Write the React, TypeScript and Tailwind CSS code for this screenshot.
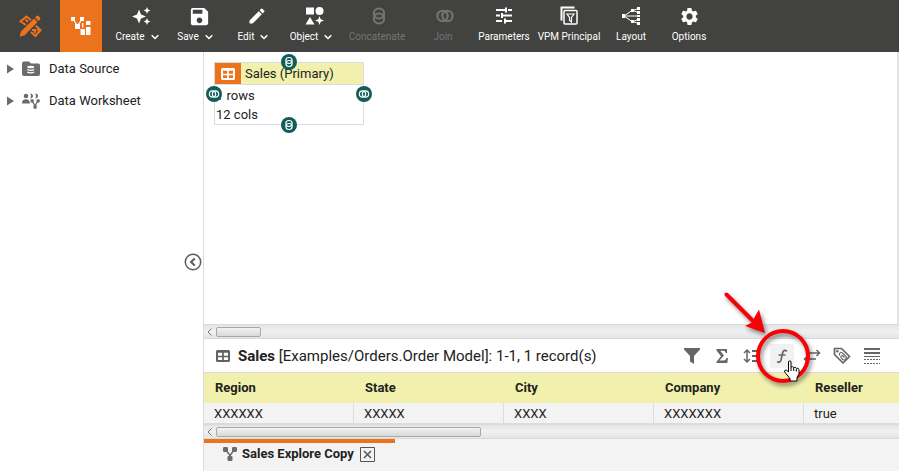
import React from "react";
import { MdSave, MdEdit, MdSettings } from "react-icons/md";

type IconProps = { className?: string };

function LogoIcon() {
  return (
    <svg width="24" height="24" viewBox="0 0 24 24" fill="none" stroke="#ec731c">
      <path d="M8 11 2.5 7.5 8.5 2.5l5 4M7.5 5.5 10 8M13 18l4.500 4 5-6-5-4.500M14 16h3v3M19 15l1.500 1.500" strokeWidth="2" />
      <path d="M3 21 18 6" stroke="#424240" strokeWidth="7" />
      <path d="M1.500 22.500 3 17.500 16 4.500 19.500 8 6.500 21.500Z" fill="#ec731c" stroke="none" />
      <path d="m17 3.500 1.500-1.500a1.500 1.500 0 0 1 2 0l1.500 1.500a1.500 1.500 0 0 1 0 2L20.500 7Z" fill="#ec731c" stroke="none" />
    </svg>
  );
}

function WorksheetAppIcon() {
  return (
    <svg width="20" height="20" viewBox="0 0 20 20" fill="#fff">
      <path d="M0 1h4v4H0zM9 1h4v4H9zM4 8h5v5H4zM9.500 13H14v6H9.500zM15 5h4.500v4H15zM15 11h4.500v8H15z" />
      <path d="M2.500 4 6 9M10.500 4 7 9M11.700 7v4.500" stroke="#fff" strokeWidth="1.300" fill="none" />
    </svg>
  );
}

function SparkleIcon() {
  return (
    <svg width="20" height="20" viewBox="0 0 20 20" fill="currentColor">
      <path d="M8 3.500 10 8.500 15 10.500 10 12.500 8 17.500 6 12.500 1 10.500 6 8.500Z" />
      <path d="m16 1 1 2.500 2.500 1-2.500 1L16 8l-1-2.500-2.500-1 2.500-1ZM16 12l1 2.500 2.500 1-2.500 1-1 2.500-1-2.500-2.500-1 2.500-1Z" />
    </svg>
  );
}

function ShapesIcon() {
  return (
    <svg width="20" height="20" viewBox="0 0 20 20" fill="currentColor">
      <path d="M1 1.500h8v7H1zM5 11l4.500 7.500H.5ZM14.500 10l1.200 3.300 3.300 1.200-3.300 1.200-1.200 3.300-1.200-3.300-3.300-1.200 3.300-1.200Z" />
      <circle cx="14.500" cy="5" r="4" />
    </svg>
  );
}

function RingsIcon({ className }: IconProps) {
  return (
    <svg className={className} viewBox="0 0 20 20" fill="none" stroke="currentColor" strokeWidth="2">
      <circle cx="7.500" cy="10" r="5.200" />
      <circle cx="12.500" cy="10" r="5.200" />
    </svg>
  );
}

function StackedRingsIcon({ className }: IconProps) {
  return (
    <svg className={className} viewBox="0 0 20 20" fill="none" stroke="currentColor" strokeWidth="2">
      <rect x="4.800" y="2.500" width="10.400" height="10" rx="5" />
      <rect x="4.800" y="7.500" width="10.400" height="10" rx="5" />
    </svg>
  );
}

function SlidersIcon() {
  return (
    <svg width="20" height="20" viewBox="0 0 20 20" stroke="currentColor" strokeWidth="2" fill="none">
      <path d="M2 4h9M14 4h4M12 1.500v5M2 9.500h4M9 9.500h9M8 7v5M2 15h6M12 15h6M11 12.500v5" />
    </svg>
  );
}

function VpmIcon() {
  return (
    <svg width="20" height="20" viewBox="0 0 20 20" stroke="currentColor" fill="none">
      <path d="M2.500 14.500v-13h13" strokeWidth="2" />
      <rect x="5" y="4.500" width="13" height="13.500" rx="1" strokeWidth="1.500" />
      <path d="M8 8h7l-2.500 3.500V16l-2-1.500v-3Z" strokeWidth="1.200" />
    </svg>
  );
}

function TreeLayoutIcon() {
  return (
    <svg width="20" height="20" viewBox="0 0 20 20" stroke="currentColor" fill="currentColor">
      <path d="m3 10 8-5.500M3 10h14M3 10l8 5.500M12 4.500l5-2M12 4.500l5 2M12 15.500l5-2M12 15.500l5 2" fill="none" strokeWidth="1" />
      <path d="M1 8h3v4H1zM10 3h3v3h-3zM10 14h3v3h-3zM16 1h3v3h-3zM16 5h3v3h-3zM16 9h3v2h-3zM16 12h3v3h-3zM16 16h3v3h-3z" stroke="none" />
    </svg>
  );
}

function CaretDown() {
  return (
    <svg width="8" height="6" viewBox="0 0 8 6" fill="none" stroke="currentColor" strokeWidth="1.500">
      <path d="m.7 1.200 3.300 3.300 3.300-3.300" />
    </svg>
  );
}

function ExpandIcon() {
  return (
    <svg width="7" height="10" viewBox="0 0 7 10" fill="#6b6b6b">
      <path d="M0 .5 7 5 0 9.500Z" />
    </svg>
  );
}

function DataFolderIcon() {
  return (
    <svg width="18" height="16" viewBox="0 0 18 16">
      <path d="M0 2.500A2 2 0 0 1 2 .5h5l2 2h7a2 2 0 0 1 2 2V13a2 2 0 0 1-2 2H2a2 2 0 0 1-2-2Z" fill="#6b6b6b" />
      <ellipse cx="8.700" cy="6" rx="3.500" ry="1.300" fill="#fff" />
      <path d="M5.200 8q3.500 1.600 7 0v1.300q-3.500 1.600-7 0ZM5.200 10.500q3.500 1.600 7 0v1.300q-3.500 1.600-7 0Z" fill="#fff" />
    </svg>
  );
}

function TreeNodes({ className }: IconProps) {
  return (
    <svg className={className} viewBox="0 0 14 14" fill="#6b6b6b">
      <path d="M2.500 2.500 7 8.500l4.500-6" fill="none" stroke="#6b6b6b" strokeWidth="1.500" />
      <rect x="0" y="0" width="5" height="5" rx="1.300" />
      <rect x="9" y="0" width="5" height="5" rx="1.300" />
      <path d="M6.200 7h1.600v3H6.200z" />
      <rect x="4.500" y="9" width="5" height="5" rx="1.300" />
    </svg>
  );
}

function WorksheetUsersIcon() {
  return (
    <svg width="18" height="16" viewBox="0 0 18 16" fill="#6b6b6b">
      <circle cx="4" cy="3" r="2.300" />
      <path d="M0 10.500Q0 6.300 4 6.300q3.500 0 4 4.200Z" />
      <path d="M8 .5q3 .2 3 2.500T8 5.500q2-2.500 0-5ZM13 .5q3 .2 3 2.500t-3 2.500q2-2.500 0-5Z" />
      <path d="m10 8 3 4.500L16 8" fill="none" stroke="#6b6b6b" strokeWidth="1.300" />
      <rect x="8.500" y="6.300" width="3.200" height="3.200" rx=".8" />
      <rect x="14.500" y="6.300" width="3.200" height="3.200" rx=".8" />
      <rect x="11.500" y="12" width="3.200" height="3.700" rx=".8" />
    </svg>
  );
}

function TableIcon({ className }: IconProps) {
  return (
    <svg className={className} viewBox="0 0 14 12" fill="none" stroke="currentColor">
      <rect x="1" y="1" width="12" height="10" rx=".5" strokeWidth="2" />
      <path d="M1 2h12M7 2v9M1 6.500h12" strokeWidth="1.700" />
    </svg>
  );
}

function FilterIcon() {
  return (
    <svg width="18" height="18" viewBox="0 0 18 18" fill="currentColor">
      <path d="M1 1h16v1.500L11 9v8l-4-2.500V9L1 2.500Z" />
    </svg>
  );
}

function SigmaIcon() {
  return (
    <svg width="18" height="18" viewBox="0 0 18 18" fill="currentColor">
      <path d="M3.500 2h10.500v4h-1.300q-.2-2.200-2.500-2.200H7.200L11 8.500 6.500 13.500h4.300q2 0 2.700-2.500H15l-.7 5H3.500v-1.300L8 9.200 3.500 3.500Z" />
    </svg>
  );
}

function SortIcon() {
  return (
    <svg width="18" height="18" viewBox="0 0 18 18" fill="none" stroke="currentColor">
      <path d="M4 3v12M1 6l3-3 3 3M1 12l3 3 3-3" strokeWidth="1.500" />
      <path d="M9 4h7M9 9h7M9 14h7" strokeWidth="2" />
    </svg>
  );
}

function FunctionIcon() {
  return (
    <svg width="18" height="18" viewBox="0 0 18 18" fill="none" stroke="currentColor" strokeWidth="1.700">
      <path d="M14 4.300Q11 2 9.800 5.200L8 13q-.8 3-4 1.800M5.500 8h7" />
    </svg>
  );
}

function SwapIcon() {
  return (
    <svg width="18" height="18" viewBox="0 0 18 18" fill="none" stroke="currentColor" strokeWidth="1.500">
      <path d="M5 6h11M13.500 3l3 3-3 3M13 12H2M4.500 9l-3 3 3 3" />
    </svg>
  );
}

function TagIcon() {
  return (
    <svg width="18" height="18" viewBox="0 0 18 18" fill="none" stroke="currentColor">
      <path d="M1.500 1.500v6L10 16l6.500-6.500L8.500 1.500Z" strokeWidth="1.700" strokeLinejoin="round" />
      <circle cx="4.300" cy="4.300" r="1.200" fill="currentColor" stroke="none" />
      <path d="M6.500 8.500v-2q1.500-2 3.500 0l3 3q1 2-.5 3t-3 0L8 10.500q-.5-2 1.500-2l2 2" strokeWidth="1.200" />
    </svg>
  );
}

function LinesIcon() {
  return (
    <svg width="18" height="18" viewBox="0 0 18 18" fill="none" stroke="currentColor">
      <path d="M1 2h16M1 6h16" strokeWidth="2" />
      <path d="M1 9.500h16" />
      <path d="M1 12.500h16M1 16.500h16" strokeDasharray="2 1" />
    </svg>
  );
}

function Callout() {
  return (
    <svg
      className="pointer-events-none absolute -top-[56px] -left-[56px] z-10 drop-shadow-[2px_3px_2px_rgba(0,0,0,0.45)]"
      width="96"
      height="100"
      viewBox="0 0 96 100"
      fill="none"
      stroke="#fa0006"
    >
      <circle cx="69" cy="68" r="25" strokeWidth="4" />
      <path d="m12.500 6.500 29 29" strokeWidth="4" strokeLinecap="round" />
      <path d="m51 45-20-7 7-3.500 3.500-7 3.500-6Z" fill="#fa0006" stroke="none" />
    </svg>
  );
}

function HandPointer() {
  return (
    <svg className="pointer-events-none absolute top-4 left-3.5 z-20" width="18" height="22" viewBox="0 0 18 22">
      <path
        d="M4.500 1.500q1.500-1.300 2.500 0V7q1.500-1 2.700.5 1.800-1 2.600.8 2.300-.8 2.700 1.500V14l-2 3.500V21H6v-2.500L.7 12q-.5-2 1.500-2l2.300 2Z"
        fill="#fff"
        stroke="#000"
      />
      <path d="M7 7v4M9.700 8v3M12.300 9v2.500" stroke="#000" />
    </svg>
  );
}

type Tool = { label: string; icon: React.ReactNode; width: string; menu?: boolean; disabled?: boolean };

const tools: Tool[] = [
  { label: "Create", icon: <SparkleIcon />, width: "w-[58px]", menu: true },
  { label: "Save", icon: <MdSave size={23} />, width: "w-[58px]", menu: true },
  { label: "Edit", icon: <MdEdit size={20} />, width: "w-[58px]", menu: true },
  { label: "Object", icon: <ShapesIcon />, width: "w-[58px]", menu: true },
  { label: "Concatenate", icon: <StackedRingsIcon className="size-5" />, width: "w-[74px]", disabled: true },
  { label: "Join", icon: <RingsIcon className="size-5" />, width: "w-[58px]", disabled: true },
  { label: "Parameters", icon: <SlidersIcon />, width: "w-16" },
  { label: "VPM Principal", icon: <VpmIcon />, width: "w-[66px]" },
  { label: "Layout", icon: <TreeLayoutIcon />, width: "w-[58px]" },
  { label: "Options", icon: <MdSettings size={21} />, width: "w-[58px]" },
];

function Header() {
  return (
    <header className="flex h-13 shrink-0 bg-[#424240] text-white">
      <div className="flex w-15 items-center justify-center">
        <LogoIcon />
      </div>
      <button type="button" aria-label="Worksheet" className="mr-1.5 flex w-[42px] items-center justify-center bg-[#ec731c]">
        <WorksheetAppIcon />
      </button>
      {tools.map((t) => (
        <button
          key={t.label}
          type="button"
          disabled={t.disabled}
          className={`${t.width} flex shrink-0 flex-col items-center pt-1.5 text-[10px] leading-4 whitespace-nowrap disabled:text-[#747472]`}
        >
          <span className={`flex h-5 items-center ${t.menu ? "pl-2" : t.disabled ? "pl-1" : ""}`}>{t.icon}</span>
          <span className="mt-[3px] flex items-center gap-1.5">
            {t.label}
            {t.menu && <CaretDown />}
          </span>
        </button>
      ))}
    </header>
  );
}

function TreeRow({ label, icon }: { label: string; icon: React.ReactNode }) {
  return (
    <button type="button" className="flex h-8 items-center text-left">
      <ExpandIcon />
      <span className="ml-2 w-[27px]">{icon}</span>
      <span>{label}</span>
    </button>
  );
}

function Sidebar() {
  return (
    <aside className="relative flex w-51 shrink-0 flex-col border-r border-[#dcdcdc] pt-px pl-[7px]">
      <TreeRow label="Data Source" icon={<DataFolderIcon />} />
      <TreeRow label="Data Worksheet" icon={<WorksheetUsersIcon />} />
      <button type="button" aria-label="Collapse" className="absolute top-1/2 right-px -translate-y-1/2 text-[#5c5c5c]">
        <svg width="18" height="18" viewBox="0 0 18 18" fill="none" stroke="currentColor" strokeWidth="1.500">
          <circle cx="9" cy="9" r="7.700" />
          <path d="M10.800 5.500 7 9l3.800 3.500" strokeWidth="2" />
        </svg>
      </button>
    </aside>
  );
}

function ScrollBar({ thumb }: { thumb: string }) {
  return (
    <div className="flex h-[15px] shrink-0 items-center border-y border-[#dadada] bg-linear-to-b from-[#e5e5e5] via-[#f0f0f0] to-[#e5e5e5]">
      <svg className="ml-0.5" width="8" height="8" viewBox="0 0 8 8" fill="none" stroke="#777">
        <path d="M5.500.5 2 4l3.500 3.500" />
      </svg>
      <div className={`${thumb} ml-0.5 h-2.5 rounded-xs border border-[#a9a9a9] bg-linear-to-b from-[#f2f2f2] to-[#d9d9d9]`} />
    </div>
  );
}

function Connector({ place, stacked }: { place: string; stacked?: boolean }) {
  return (
    <span className={`${place} absolute flex size-4 items-center justify-center rounded-full bg-[#115e59] text-white`}>
      {stacked ? <StackedRingsIcon className="size-3" /> : <RingsIcon className="size-3" />}
    </span>
  );
}

function Canvas() {
  return (
    <div className="relative min-h-0 flex-1 border-r-2 border-[#e4e4e4]">
      <div className="absolute top-2.5 left-2.5 w-[150px] border border-[#dcdcdc]">
        <div className="flex h-[22px] items-center border-b border-[#dcdcdc] bg-[#f1f1ad]">
          <span className="mr-1 flex h-full w-[26px] items-center justify-center bg-[#ec731c] text-white">
            <TableIcon className="h-3 w-3.5" />
          </span>
          Sales (Primary)
        </div>
        <div className="pt-px pl-px leading-[19px]">
          <p>1 rows</p>
          <p>12 cols</p>
        </div>
        <Connector place="-top-[9px] left-[66px]" stacked />
        <Connector place="-bottom-[9px] left-[66px]" stacked />
        <Connector place="top-[23px] -left-[9px]" />
        <Connector place="top-[23px] -right-[9px]" />
      </div>
    </div>
  );
}

const actions = [
  { name: "Filter", icon: <FilterIcon /> },
  { name: "Group and aggregate", icon: <SigmaIcon /> },
  { name: "Sort", icon: <SortIcon /> },
  { name: "Expression", icon: <FunctionIcon />, active: true },
  { name: "Change type", icon: <SwapIcon /> },
  { name: "Tag", icon: <TagIcon /> },
  { name: "Rows", icon: <LinesIcon /> },
];

function DetailBar() {
  return (
    <div className="flex h-[33px] shrink-0 items-center pr-[15px] pl-3">
      <TableIcon className="mr-2 h-3 w-3.5 text-[#626262]" />
      <h2 className="flex-1 pt-px text-[15px]">
        <b>Sales</b> [Examples/Orders.Order Model]: 1-1, 1 record(s)
      </h2>
      <div className="flex gap-1.5 text-[#666]">
        {actions.map((a) => (
          <div key={a.name} className="relative">
            <button
              type="button"
              aria-label={a.name}
              className={`flex size-6 items-center justify-center ${a.active ? "bg-[#f1f1f1]" : ""}`}
            >
              {a.icon}
            </button>
            {a.active && <Callout />}
            {a.active && <HandPointer />}
          </div>
        ))}
      </div>
    </div>
  );
}

const columns = [
  ["Region", "XXXXXX"],
  ["State", "XXXXX"],
  ["City", "XXXX"],
  ["Company", "XXXXXXX"],
  ["Reseller", "true"],
];

function DataTable() {
  return (
    <div className="shrink-0 overflow-hidden border-t border-[#dcdcdc]">
      <table className="w-[750px] table-fixed border-separate border-spacing-0 text-left">
        <thead>
          <tr className="h-[30px] bg-[#f1f1ad]">
            {columns.map(([name]) => (
              <th key={name} scope="col" className="px-[11px] py-0 font-bold">
                {name}
              </th>
            ))}
          </tr>
        </thead>
        <tbody>
          <tr className="h-[21px] bg-[#f3f3f3]">
            {columns.map(([name, value]) => (
              <td key={name} className="border-r border-b border-[#dcdcdc] px-2.5 pt-0.5 pb-0 leading-4">
                {value}
              </td>
            ))}
          </tr>
        </tbody>
      </table>
    </div>
  );
}

function SheetTabs() {
  return (
    <footer className="flex h-8 shrink-0 bg-[#f3f3f3]">
      <div className="flex w-[191px] items-center border-t-4 border-[#ec731c] pb-1.5 pl-[19px]">
        <TreeNodes className="mr-[5px] size-3.5" />
        <button type="button" className="font-bold whitespace-nowrap">
          Sales Explore Copy
        </button>
        <button type="button" aria-label="Close tab" className="ml-1.5 text-[#555]">
          <svg width="15" height="15" viewBox="0 0 15 15" fill="none" stroke="currentColor">
            <path d="M.5.5h14v14H.5z" />
            <path d="m4 4 7 7M11 4l-7 7" strokeWidth="1.500" />
          </svg>
        </button>
      </div>
    </footer>
  );
}

export default function App() {
  return (
    <div className="flex h-screen flex-col overflow-hidden bg-white font-[Roboto,'Liberation_Sans',sans-serif] text-[13px] text-[#222]">
      <Header />
      <div className="flex min-h-0 flex-1">
        <Sidebar />
        <main className="flex min-w-0 flex-1 flex-col">
          <Canvas />
          <ScrollBar thumb="w-[45px]" />
          <DetailBar />
          <DataTable />
          <ScrollBar thumb="w-[265px]" />
          <SheetTabs />
        </main>
      </div>
    </div>
  );
}
